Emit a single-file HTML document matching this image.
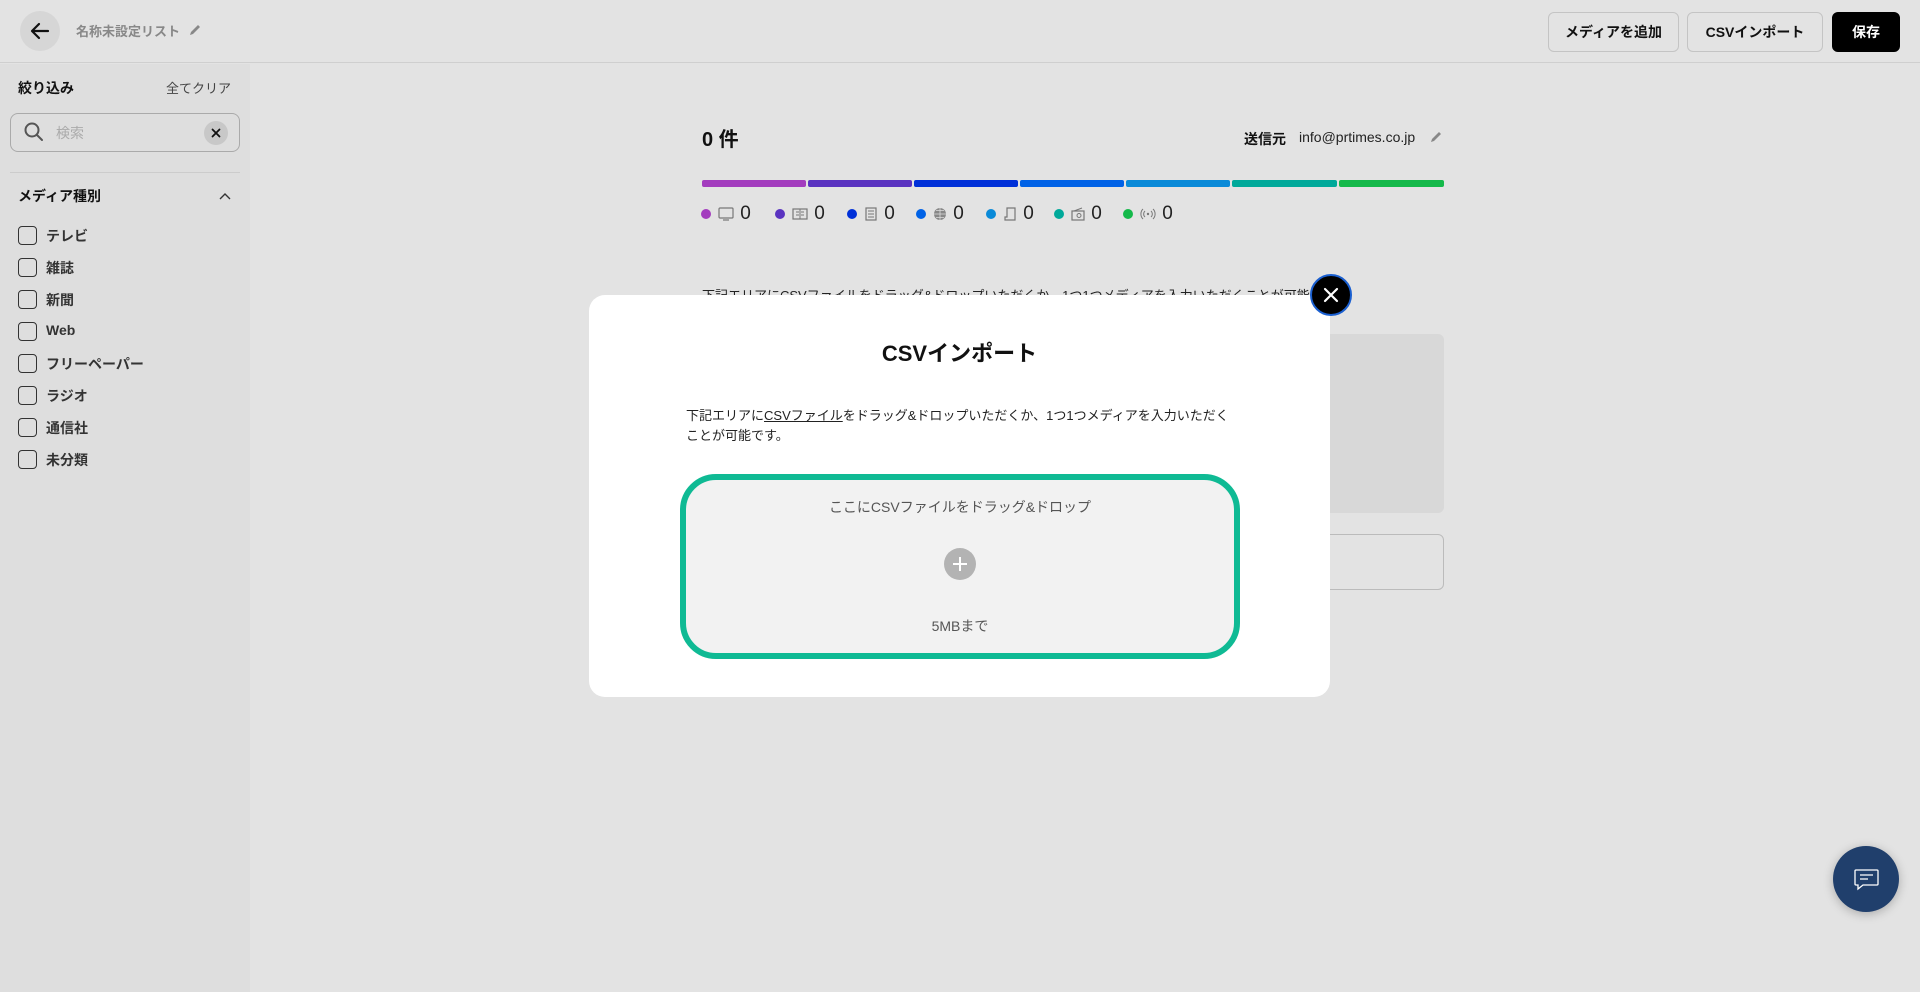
<!DOCTYPE html>
<html><head><meta charset="utf-8">
<style>
*{box-sizing:border-box;margin:0;padding:0}
body{width:1920px;height:992px;overflow:hidden;background:#e3e3e3;font-family:"Liberation Sans","Noto Sans CJK JP",sans-serif;color:#111;position:relative}
.abs{position:absolute}
.hdr{left:0;top:0;width:1920px;height:63px;border-bottom:1px solid #cfcfcf;background:#e3e3e3}
.back{left:20px;top:11px;width:40px;height:40px;border-radius:50%;background:#d6d6d6}
.btn{top:12px;height:40px;border:1px solid #c4c4c4;border-radius:6px;background:#e3e3e3;font-size:14px;font-weight:bold;display:flex;align-items:center;justify-content:center}
.side{left:0;top:64px;width:250px;height:928px;background:#dedede}
.cb{left:18px;width:19px;height:19px;border:1.5px solid #333;border-radius:4px}
.cl{left:46px;font-size:14px;font-weight:bold;color:#333}
.seg{top:180px;height:7px;border-radius:2px}
.lg{top:203px;display:flex;align-items:center;font-size:19px;color:#222}
.dot{width:10px;height:10px;border-radius:50%;margin-right:6px}
.modal{left:589px;top:295px;width:741px;height:402px;background:#fff;border-radius:16px}
</style></head><body>
<div class="abs hdr"></div>
<div class="abs back"><svg width="40" height="40" viewBox="0 0 40 40"><path d="M28 20H13M19 13l-7 7 7 7" stroke="#111" stroke-width="2.2" fill="none" stroke-linecap="round" stroke-linejoin="round"/></svg></div>
<div class="abs" style="left:76px;top:21px;font-size:13px;color:#888;font-weight:bold">名称未設定リスト</div>
<svg class="abs" style="left:188px;top:23px" width="14" height="14" viewBox="0 0 14 14"><path d="M2 12l1-3 7-7 2 2-7 7z" fill="#888"/></svg>
<div class="abs btn" style="left:1548px;width:131px">メディアを追加</div>
<div class="abs btn" style="left:1687px;width:136px">CSVインポート</div>
<div class="abs btn" style="left:1832px;width:68px;background:#000;color:#fff;border-color:#000">保存</div>

<div class="abs side"></div>
<div class="abs" style="left:18px;top:78px;font-size:14px;font-weight:bold">絞り込み</div>
<div class="abs" style="left:166px;top:78px;font-size:13px;color:#444">全てクリア</div>
<div class="abs" style="left:10px;top:113px;width:230px;height:39px;border:1px solid #aaa;border-radius:8px"></div>
<svg class="abs" style="left:23px;top:121px" width="22" height="22" viewBox="0 0 22 22"><circle cx="9" cy="9" r="6.5" stroke="#555" stroke-width="2" fill="none"/><path d="M14 14l5 5" stroke="#555" stroke-width="2" stroke-linecap="round"/></svg>
<div class="abs" style="left:56px;top:123px;font-size:14px;color:#aaa">検索</div>
<div class="abs" style="left:204px;top:121px;width:24px;height:24px;border-radius:50%;background:#c8c8c8"></div>
<svg class="abs" style="left:204px;top:121px" width="24" height="24" viewBox="0 0 24 24"><path d="M8.5 8.5l7 7M15.5 8.5l-7 7" stroke="#111" stroke-width="1.8" stroke-linecap="round"/></svg>
<div class="abs" style="left:10px;top:172px;width:230px;height:1px;background:#ccc"></div>
<div class="abs" style="left:18px;top:186px;font-size:14px;font-weight:bold">メディア種別</div>
<svg class="abs" style="left:218px;top:190px" width="14" height="12" viewBox="0 0 14 12"><path d="M2 9l5-5 5 5" stroke="#333" stroke-width="1.4" fill="none"/></svg>
<div class="abs cb" style="top:226px"></div><div class="abs cl" style="top:226px">テレビ</div>
<div class="abs cb" style="top:258px"></div><div class="abs cl" style="top:258px">雑誌</div>
<div class="abs cb" style="top:290px"></div><div class="abs cl" style="top:290px">新聞</div>
<div class="abs cb" style="top:322px"></div><div class="abs cl" style="top:322px">Web</div>
<div class="abs cb" style="top:354px"></div><div class="abs cl" style="top:354px">フリーペーパー</div>
<div class="abs cb" style="top:386px"></div><div class="abs cl" style="top:386px">ラジオ</div>
<div class="abs cb" style="top:418px"></div><div class="abs cl" style="top:418px">通信社</div>
<div class="abs cb" style="top:450px"></div><div class="abs cl" style="top:450px">未分類</div>

<div class="abs" style="left:702px;top:123px;font-size:20px;font-weight:bold">0 件</div>
<div class="abs" style="left:1244px;top:129px;font-size:14px;font-weight:bold">送信元</div>
<div class="abs" style="left:1299px;top:129px;font-size:14px;color:#222">info@prtimes.co.jp</div>
<svg class="abs" style="left:1429px;top:130px" width="14" height="14" viewBox="0 0 14 14"><path d="M2 12l1-3 7-7 2 2-7 7z" fill="#888"/></svg>
<div class="abs seg" style="left:702px;width:104px;background:#a33cbe"></div>
<div class="abs seg" style="left:808px;width:104px;background:#5a33c0"></div>
<div class="abs seg" style="left:914px;width:104px;background:#0030d8"></div>
<div class="abs seg" style="left:1020px;width:104px;background:#0062e6"></div>
<div class="abs seg" style="left:1126px;width:104px;background:#0a8ad8"></div>
<div class="abs seg" style="left:1232px;width:105px;background:#00a99a"></div>
<div class="abs seg" style="left:1339px;width:105px;background:#15b94a"></div>
<div class="abs lg" style="left:701px"><span class="dot" style="background:#a33cbe"></span><svg width="18" height="16" viewBox="0 0 18 16"><rect x="2" y="2" width="14" height="10" rx="1" stroke="#777" fill="none" stroke-width="1.2"/><path d="M6 14h6" stroke="#777" stroke-width="1.2"/></svg>&nbsp;0</div>
<div class="abs lg" style="left:775px"><span class="dot" style="background:#5a33c0"></span><svg width="18" height="16" viewBox="0 0 18 16"><rect x="2" y="3" width="14" height="10" stroke="#777" fill="none" stroke-width="1.2"/><path d="M5 6h3M5 9h3M10 6h3M10 9h3M9 3v10" stroke="#777"/></svg>&nbsp;0</div>
<div class="abs lg" style="left:847px"><span class="dot" style="background:#0030d8"></span><svg width="16" height="16" viewBox="0 0 16 16"><rect x="3" y="2" width="10" height="12" stroke="#777" fill="none" stroke-width="1.2"/><path d="M5 5h6M5 8h6M5 11h6" stroke="#777"/></svg>&nbsp;0</div>
<div class="abs lg" style="left:916px"><span class="dot" style="background:#0062e6"></span><svg width="16" height="16" viewBox="0 0 16 16"><circle cx="8" cy="8" r="6" fill="#888"/><path d="M2 8h12M8 2v12M4 4.5h8M4 11.5h8" stroke="#ddd" stroke-width=".8"/></svg>&nbsp;0</div>
<div class="abs lg" style="left:986px"><span class="dot" style="background:#0a8ad8"></span><svg width="16" height="16" viewBox="0 0 16 16"><path d="M5 2h8v12H3v-3h2z" stroke="#777" fill="none" stroke-width="1.2"/></svg>&nbsp;0</div>
<div class="abs lg" style="left:1054px"><span class="dot" style="background:#00a99a"></span><svg width="16" height="16" viewBox="0 0 16 16"><rect x="2" y="5" width="12" height="9" stroke="#777" fill="none" stroke-width="1.2"/><circle cx="9" cy="9.5" r="2" stroke="#777" fill="none"/><path d="M4 5l8-3" stroke="#777"/></svg>&nbsp;0</div>
<div class="abs lg" style="left:1123px"><span class="dot" style="background:#15b94a"></span><svg width="18" height="16" viewBox="0 0 18 16"><circle cx="9" cy="8" r="1.2" fill="#777"/><path d="M6 5a4 4 0 000 6M12 5a4 4 0 010 6M4 3a7 7 0 000 10M14 3a7 7 0 010 10" stroke="#777" fill="none"/></svg>&nbsp;0</div>

<div class="abs" style="left:702px;top:285px;font-size:13px;color:#222;white-space:nowrap">下記エリアにCSVファイルをドラッグ&amp;ドロップいただくか、1つ1つメディアを入力いただくことが可能です。</div>
<div class="abs" style="left:1280px;top:334px;width:164px;height:179px;background:#d8d8d8;border-radius:6px"></div>
<div class="abs" style="left:1280px;top:534px;width:164px;height:56px;border:1px solid #bbb;border-radius:6px"></div>

<div class="abs modal"></div>
<div class="abs" style="left:589px;top:336px;width:741px;text-align:center;font-size:22px;font-weight:bold">CSVインポート</div>
<div class="abs" style="left:686px;top:406px;width:548px;font-size:13px;line-height:20px;color:#222">下記エリアに<span style="text-decoration:underline">CSVファイル</span>をドラッグ&amp;ドロップいただくか、1つ1つメディアを入力いただくことが可能です。</div>
<div class="abs" style="left:680px;top:474px;width:560px;height:185px;border:6px solid #0fba94;border-radius:36px;background:#f2f2f2"></div>
<div class="abs" style="left:680px;top:497px;width:560px;text-align:center;font-size:14px;color:#555">ここにCSVファイルをドラッグ&amp;ドロップ</div>
<div class="abs" style="left:944px;top:548px;width:32px;height:32px;border-radius:50%;background:#b3b3b3"></div>
<svg class="abs" style="left:944px;top:548px" width="32" height="32" viewBox="0 0 32 32"><path d="M16 9v14M9 16h14" stroke="#fff" stroke-width="2"/></svg>
<div class="abs" style="left:680px;top:616px;width:560px;text-align:center;font-size:14px;color:#555">5MBまで</div>
<div class="abs" style="left:1310px;top:274px;width:42px;height:42px;border-radius:50%;background:#000;border:2px solid #1a5fd0"></div>
<svg class="abs" style="left:1310px;top:274px" width="42" height="42" viewBox="0 0 42 42"><path d="M15 15l12 12M27 15l-12 12" stroke="#fff" stroke-width="2.2" stroke-linecap="round"/></svg>

<div class="abs" style="left:1833px;top:846px;width:66px;height:66px;border-radius:50%;background:#203f6c;box-shadow:0 2px 10px rgba(0,0,0,.25)"></div>
<svg class="abs" style="left:1833px;top:846px" width="66" height="66" viewBox="0 0 66 66"><path d="M23 24h21a1 1 0 011 1v13a1 1 0 01-1 1H30l-5 4v-4h-2a1 1 0 01-1-1V25a1 1 0 011-1z" stroke="#fff" stroke-width="1.3" fill="none"/><path d="M27 29h13M27 33h8" stroke="#fff" stroke-width="1.3"/></svg>
</body></html>
